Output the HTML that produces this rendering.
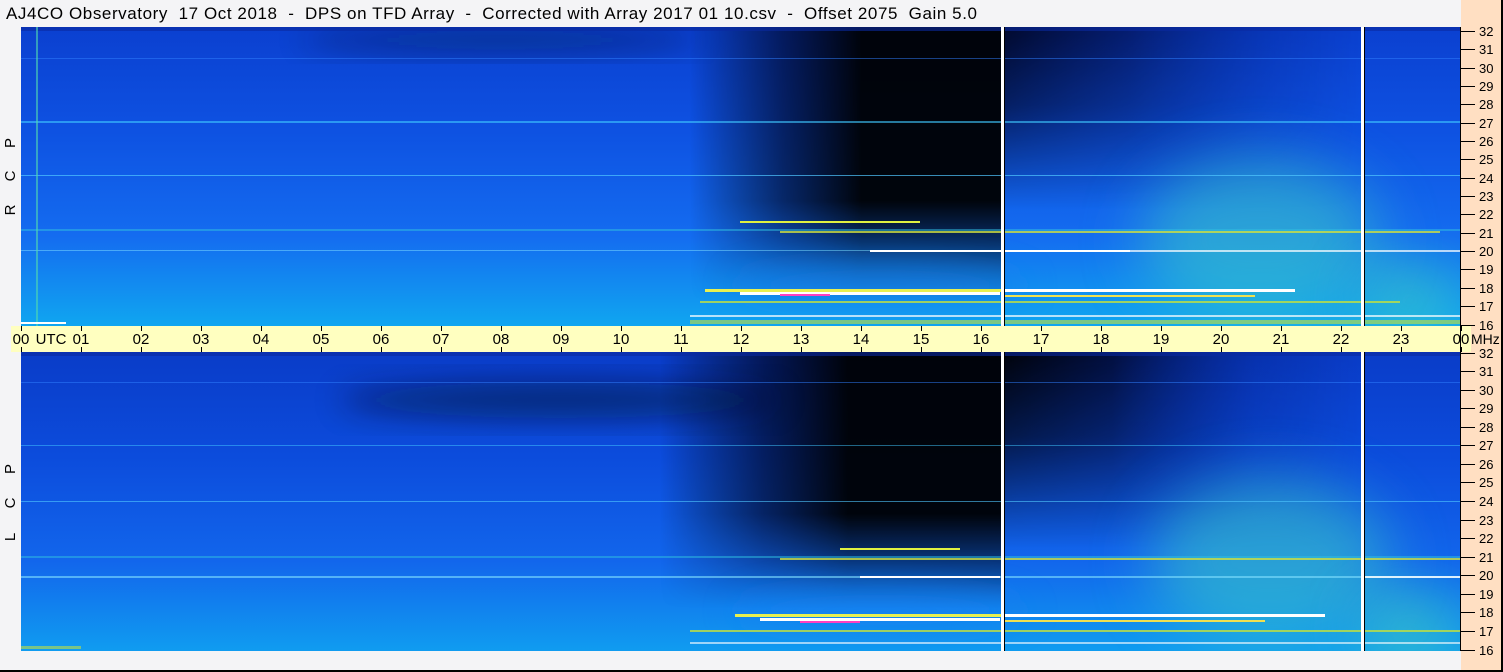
<!DOCTYPE html>
<html><head><meta charset="utf-8"><style>
html,body{margin:0;padding:0;background:#f4f4f6;}
svg{display:block;font-family:"Liberation Sans",sans-serif;}
</style></head><body>
<svg width="1503" height="672" viewBox="0 0 1503 672" xmlns="http://www.w3.org/2000/svg">
<defs>
<linearGradient id="base1" x1="0" y1="0" x2="0" y2="1">
<stop offset="0" stop-color="#0b40d0"/><stop offset="0.35" stop-color="#0e52e2"/><stop offset="0.7" stop-color="#146cf0"/><stop offset="1" stop-color="#10a6f0"/></linearGradient>
<linearGradient id="base2" x1="0" y1="0" x2="0" y2="1">
<stop offset="0" stop-color="#0a3cc8"/><stop offset="0.35" stop-color="#0c4cdc"/><stop offset="0.7" stop-color="#1266ec"/><stop offset="1" stop-color="#109cf0"/></linearGradient>
<linearGradient id="hdark" x1="0" y1="0" x2="1" y2="0">
<stop offset="0" stop-color="#000" stop-opacity="0"/><stop offset="0.3" stop-color="#000010" stop-opacity="0.6"/><stop offset="0.55" stop-color="#000" stop-opacity="0.95"/><stop offset="1" stop-color="#000" stop-opacity="0.95"/></linearGradient>
<linearGradient id="hdarkR" x1="0" y1="0" x2="1" y2="0">
<stop offset="0" stop-color="#000010" stop-opacity="0.85"/><stop offset="0.35" stop-color="#000020" stop-opacity="0.55"/><stop offset="0.75" stop-color="#001060" stop-opacity="0.2"/><stop offset="1" stop-color="#001060" stop-opacity="0"/></linearGradient>
<linearGradient id="hdarkR2" x1="0" y1="0" x2="1" y2="0">
<stop offset="0" stop-color="#000" stop-opacity="0.95"/><stop offset="0.3" stop-color="#000010" stop-opacity="0.75"/><stop offset="0.7" stop-color="#001060" stop-opacity="0.25"/><stop offset="1" stop-color="#001060" stop-opacity="0"/></linearGradient>
<linearGradient id="vm1" x1="0" y1="0" x2="0" y2="1">
<stop offset="0" stop-color="#fff"/><stop offset="0.6" stop-color="#fff"/><stop offset="0.95" stop-color="#fff" stop-opacity="0"/></linearGradient>
<linearGradient id="vm2" x1="0" y1="0" x2="0" y2="1">
<stop offset="0" stop-color="#fff"/><stop offset="0.3" stop-color="#fff" stop-opacity="0.7"/><stop offset="0.7" stop-color="#fff" stop-opacity="0"/></linearGradient>
<mask id="m1" maskContentUnits="objectBoundingBox"><rect width="1" height="1" fill="url(#vm1)"/></mask>
<mask id="m2" maskContentUnits="objectBoundingBox"><rect width="1" height="1" fill="url(#vm2)"/></mask>
<filter id="b30" x="-50%" y="-50%" width="200%" height="200%"><feGaussianBlur stdDeviation="30"/></filter>
<filter id="b15" x="-50%" y="-50%" width="200%" height="200%"><feGaussianBlur stdDeviation="15"/></filter>
<clipPath id="c1"><rect x="21" y="27" width="1439" height="299"/></clipPath>
<clipPath id="c2"><rect x="21" y="352" width="1439" height="299"/></clipPath>
</defs>
<rect width="1503" height="672" fill="#f4f4f6"/>
<rect x="1461" y="0" width="42" height="672" fill="#ffdfc2"/>
<rect x="1501" y="0" width="2" height="672" fill="#000"/>
<rect x="0" y="670" width="1503" height="2" fill="#000"/>
<text x="6" y="19" font-size="17" fill="#000" xml:space="preserve" style="white-space:pre" textLength="971" lengthAdjust="spacing">AJ4CO Observatory  17 Oct 2018  -  DPS on TFD Array  -  Corrected with Array 2017 01 10.csv  -  Offset 2075  Gain 5.0</text>

<!-- Panel 1 -->
<g clip-path="url(#c1)">
<rect x="21" y="27" width="1439" height="299" fill="url(#base1)"/>
<rect x="690" y="27" width="312" height="290" fill="url(#hdark)" mask="url(#m1)"/>
<rect x="1004" y="27" width="360" height="260" fill="url(#hdarkR)" mask="url(#m2)"/>
<ellipse cx="500" cy="40" rx="200" ry="12" fill="#000820" opacity="0.4" filter="url(#b15)"/>
<ellipse cx="1260" cy="240" rx="120" ry="80" fill="#40d8c0" opacity="0.5" filter="url(#b30)"/>
<ellipse cx="1410" cy="300" rx="50" ry="35" fill="#50e0b0" opacity="0.5" filter="url(#b30)"/>
<ellipse cx="880" cy="285" rx="150" ry="25" fill="#1880f0" opacity="0.5" filter="url(#b15)"/>
<rect x="21" y="27" width="1439" height="4" fill="#0a2aa0" opacity="0.6"/>
<rect x="21" y="58" width="1439" height="1" fill="#3080ff" opacity="0.5"/>
<rect x="21" y="121" width="1439" height="2" fill="#40c8ff" opacity="0.6"/>
<rect x="21" y="175" width="1439" height="1" fill="#50c8ff" opacity="0.7"/>
<rect x="21" y="229" width="1439" height="2" fill="#30c0e0" opacity="0.5"/>
<rect x="21" y="250" width="1000" height="1" fill="#80e0ff" opacity="0.5"/>
<rect x="36" y="27" width="2" height="299" fill="#50d8b0" opacity="0.6"/>
<rect x="740" y="221" width="180" height="2" fill="#e0f040"/>
<rect x="780" y="231" width="660" height="2" fill="#d0e040" opacity="0.8"/>
<rect x="870" y="250" width="260" height="2" fill="#ffffff"/>
<rect x="1130" y="250" width="330" height="2" fill="#ffffff" opacity="0.7"/>
<rect x="705" y="289" width="300" height="3" fill="#e8f050"/>
<rect x="740" y="292" width="260" height="3" fill="#ffffff"/>
<rect x="780" y="294" width="50" height="2" fill="#ff40c0"/>
<rect x="1005" y="289" width="290" height="3" fill="#ffffff"/>
<rect x="1005" y="295" width="250" height="2" fill="#f0e050"/>
<rect x="700" y="301" width="700" height="2" fill="#c0e040" opacity="0.8"/>
<rect x="690" y="315" width="770" height="2" fill="#ffffff" opacity="0.7"/>
<rect x="690" y="320" width="770" height="4" fill="#c0e040" opacity="0.6"/>
<rect x="21" y="322" width="45" height="2" fill="#ffffff"/>
<rect x="1001" y="27" width="3" height="299" fill="#fff"/>
<rect x="1004" y="27" width="1" height="299" fill="#000"/>
<rect x="1361" y="27" width="3" height="299" fill="#fff"/>
<rect x="1364" y="27" width="1" height="299" fill="#000"/>
</g>

<!-- Panel 2 -->
<g clip-path="url(#c2)">
<rect x="21" y="352" width="1439" height="299" fill="url(#base2)"/>
<rect x="660" y="352" width="342" height="270" fill="url(#hdark)" mask="url(#m1)"/>
<rect x="1004" y="352" width="360" height="280" fill="url(#hdarkR2)" mask="url(#m2)"/>
<ellipse cx="560" cy="400" rx="220" ry="18" fill="#000820" opacity="0.5" filter="url(#b15)"/>
<ellipse cx="1270" cy="560" rx="120" ry="80" fill="#40d8c0" opacity="0.5" filter="url(#b30)"/>
<ellipse cx="1410" cy="630" rx="50" ry="35" fill="#50e0b0" opacity="0.55" filter="url(#b30)"/>
<ellipse cx="880" cy="610" rx="150" ry="25" fill="#1880f0" opacity="0.5" filter="url(#b15)"/>
<rect x="21" y="352" width="1439" height="4" fill="#0a2aa0" opacity="0.6"/>
<rect x="21" y="382" width="1439" height="1" fill="#3080ff" opacity="0.5"/>
<rect x="21" y="445" width="1439" height="1" fill="#40c8ff" opacity="0.5"/>
<rect x="21" y="501" width="1439" height="1" fill="#50c8ff" opacity="0.6"/>
<rect x="21" y="556" width="1439" height="2" fill="#30c0e0" opacity="0.5"/>
<rect x="21" y="576" width="1439" height="2" fill="#80e0ff" opacity="0.6"/>
<rect x="860" y="576" width="140" height="2" fill="#ffffff"/>
<rect x="1365" y="576" width="95" height="2" fill="#ffffff" opacity="0.8"/>
<rect x="840" y="548" width="120" height="2" fill="#e0f040"/>
<rect x="780" y="558" width="680" height="2" fill="#d0e040" opacity="0.8"/>
<rect x="735" y="614" width="270" height="3" fill="#e8f050"/>
<rect x="760" y="618" width="240" height="3" fill="#ffffff"/>
<rect x="800" y="621" width="60" height="2" fill="#ff40c0"/>
<rect x="1005" y="614" width="320" height="3" fill="#ffffff"/>
<rect x="1005" y="620" width="260" height="2" fill="#f0e050"/>
<rect x="690" y="630" width="770" height="2" fill="#c0e040" opacity="0.8"/>
<rect x="690" y="642" width="770" height="2" fill="#ffffff" opacity="0.6"/>
<rect x="21" y="646" width="60" height="3" fill="#c0e040" opacity="0.6"/>
<rect x="1001" y="352" width="3" height="299" fill="#fff"/>
<rect x="1004" y="352" width="1" height="299" fill="#000"/>
<rect x="1361" y="352" width="3" height="299" fill="#fff"/>
<rect x="1364" y="352" width="1" height="299" fill="#000"/>
</g>

<!-- time bar -->
<rect x="11" y="326" width="1460" height="26" fill="#ffffc0"/>
<g stroke="#000" stroke-width="1">
<path d="M21.5 326v5M81.5 326v5M141.5 326v5M201.5 326v5M261.5 326v5M321.5 326v5M381.5 326v5M441.5 326v5M501.5 326v5M561.5 326v5M621.5 326v5M681.5 326v5M741.5 326v5M801.5 326v5M861.5 326v5M921.5 326v5M981.5 326v5M1041.5 326v5M1101.5 326v5M1161.5 326v5M1221.5 326v5M1281.5 326v5M1341.5 326v5M1401.5 326v5M1461.5 326v5"/>
<path d="M21.5 347v5M81.5 347v5M141.5 347v5M201.5 347v5M261.5 347v5M321.5 347v5M381.5 347v5M441.5 347v5M501.5 347v5M561.5 347v5M621.5 347v5M681.5 347v5M741.5 347v5M801.5 347v5M861.5 347v5M921.5 347v5M981.5 347v5M1041.5 347v5M1101.5 347v5M1161.5 347v5M1221.5 347v5M1281.5 347v5M1341.5 347v5M1401.5 347v5M1461.5 347v5"/>
<path d="M1460.5 27v624"/>
</g>
<g font-size="15" fill="#000" text-anchor="middle">
<text x="21" y="344">00</text><text x="51" y="344">UTC</text>
<text x="81" y="344">01</text><text x="141" y="344">02</text><text x="201" y="344">03</text><text x="261" y="344">04</text><text x="321" y="344">05</text><text x="381" y="344">06</text><text x="441" y="344">07</text><text x="501" y="344">08</text><text x="561" y="344">09</text><text x="621" y="344">10</text><text x="681" y="344">11</text><text x="741" y="344">12</text><text x="801" y="344">13</text><text x="861" y="344">14</text><text x="921" y="344">15</text><text x="981" y="344">16</text><text x="1041" y="344">17</text><text x="1101" y="344">18</text><text x="1161" y="344">19</text><text x="1221" y="344">20</text><text x="1281" y="344">21</text><text x="1341" y="344">22</text><text x="1401" y="344">23</text><text x="1461" y="344">00</text>
</g>
<text x="1471" y="344" font-size="14">MHz</text>

<!-- right axis ticks -->
<g stroke="#000" stroke-width="1">
<path d="M1460 31.5h15M1460 49.5h15M1460 68.5h15M1460 86.5h15M1460 104.5h15M1460 123.5h15M1460 141.5h15M1460 159.5h15M1460 178.5h15M1460 196.5h15M1460 214.5h15M1460 233.5h15M1460 251.5h15M1460 269.5h15M1460 288.5h15M1460 306.5h15M1460 325.5h15"/>
<path d="M1460 353.5h15M1460 371.5h15M1460 390.5h15M1460 408.5h15M1460 427.5h15M1460 445.5h15M1460 464.5h15M1460 482.5h15M1460 501.5h15M1460 520.5h15M1460 538.5h15M1460 557.5h15M1460 575.5h15M1460 594.5h15M1460 612.5h15M1460 631.5h15M1460 650.5h15"/>
</g>
<g font-size="13" fill="#000">
<text x="1479" y="36">32</text><text x="1479" y="54">31</text><text x="1479" y="73">30</text><text x="1479" y="91">29</text><text x="1479" y="109">28</text><text x="1479" y="128">27</text><text x="1479" y="146">26</text><text x="1479" y="164">25</text><text x="1479" y="183">24</text><text x="1479" y="201">23</text><text x="1479" y="219">22</text><text x="1479" y="238">21</text><text x="1479" y="256">20</text><text x="1479" y="274">19</text><text x="1479" y="293">18</text><text x="1479" y="311">17</text><text x="1479" y="330">16</text>
<text x="1479" y="358">32</text><text x="1479" y="376">31</text><text x="1479" y="395">30</text><text x="1479" y="413">29</text><text x="1479" y="432">28</text><text x="1479" y="450">27</text><text x="1479" y="469">26</text><text x="1479" y="487">25</text><text x="1479" y="506">24</text><text x="1479" y="525">23</text><text x="1479" y="543">22</text><text x="1479" y="562">21</text><text x="1479" y="580">20</text><text x="1479" y="599">19</text><text x="1479" y="617">18</text><text x="1479" y="636">17</text><text x="1479" y="655">16</text>
</g>

<!-- side labels -->
<g font-size="15" fill="#000" text-anchor="middle">
<text transform="translate(15,210) rotate(-90)">R</text>
<text transform="translate(15,176) rotate(-90)">C</text>
<text transform="translate(15,143) rotate(-90)">P</text>
<text transform="translate(15,537) rotate(-90)">L</text>
<text transform="translate(15,503) rotate(-90)">C</text>
<text transform="translate(15,469) rotate(-90)">P</text>
</g>
</svg>
</body></html>
